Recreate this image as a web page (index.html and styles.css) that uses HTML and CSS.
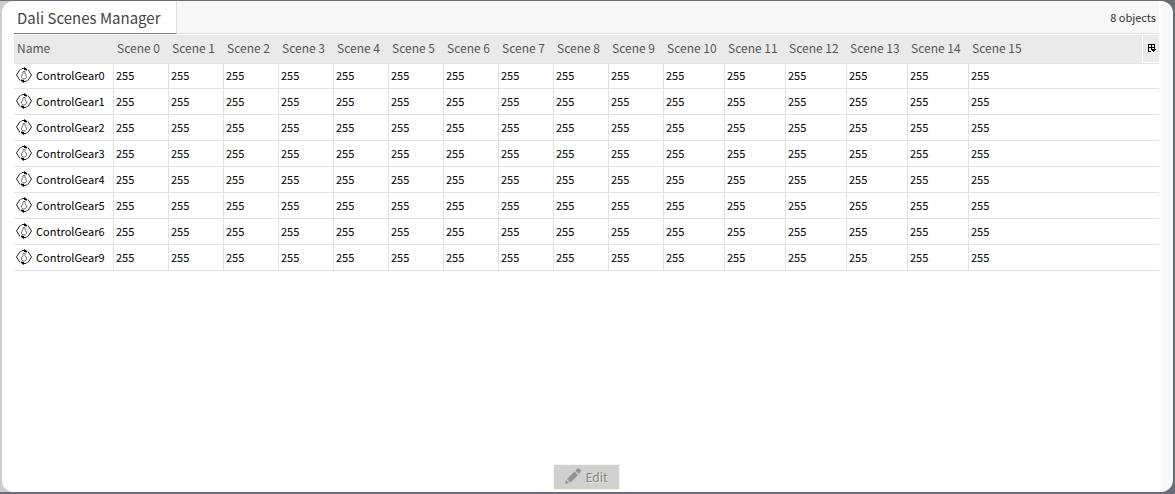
FILE: index.html
```
<!DOCTYPE html>
<html lang="en">
<head>
  <meta charset="UTF-8" />
  <meta name="viewport" content="width=device-width, initial-scale=1.0" />
  <title>Dali Scenes Manager</title>
  <link rel="stylesheet" href="styles.css">
</head>
<body>
  <!-- Shared icon for the device rows -->
  <svg class="sprite" aria-hidden="true">
    <symbol id="gear" viewBox="0 0 16 16">
      <path d="M4 2.500L0.500 8L4 13.500M12 2.500L15.500 8L12 13.500" />
      <path d="M4.500 3L6 1.500h3M11.500 13L10 14.500H7" />
      <path class="drop" d="M7 4.500h2v2l1.500 2.500c.3 2-.8 3-2.500 3s-2.800-1-2.500-3L7 6.500z" />
      <path class="tip" d="M8 0l3 2v1.500L8 3zM8 16l-3-2v-1.500l3 .5z" />
    </symbol>
  </svg>

  <main class="panel">
    <div class="content">
      <header class="titlebar">
        <h1>Dali Scenes Manager</h1>
        <span class="count">8 objects</span>
      </header>

      <table id="scenes">
        <thead>
          <tr>
            <th class="name">Name</th>
            <th class="narrow">Scene 0</th>
            <th class="narrow">Scene 1</th>
            <th class="narrow">Scene 2</th>
            <th class="narrow">Scene 3</th>
            <th class="narrow">Scene 4</th>
            <th class="narrow">Scene 5</th>
            <th class="narrow">Scene 6</th>
            <th class="narrow">Scene 7</th>
            <th class="narrow">Scene 8</th>
            <th class="narrow">Scene 9</th>
            <th class="wide">Scene 10</th>
            <th class="wide">Scene 11</th>
            <th class="wide">Scene 12</th>
            <th class="wide">Scene 13</th>
            <th class="wide">Scene 14</th>
            <th>Scene 15</th>
            <th class="options">
              <button type="button" aria-label="Table options">
                <svg width="8" height="8" viewBox="0 0 8 8" shape-rendering="crispEdges">
                  <path d="M0 0h7v5H6V4H4v1H3V4H1v3h2v1H0zM1 1v2h2V1zM4 1v2h2V1z" fill-rule="evenodd" />
                  <path d="M3 5h5v1H7v1H6v1H5V7H4V6H3z" />
                </svg>
              </button>
            </th>
          </tr>
        </thead>
        <tbody></tbody>
      </table>

      <footer class="actions">
        <button type="button" class="edit" disabled>
          <svg width="16" height="16" viewBox="0 0 16 16">
            <path d="M0 16l1-4 3 3zM2 11l7.500-7.500 3.500 3.500L5.500 14.500zM10.500 2.500L12 1c1-1 1.500-1 2.500 0l.7.700c.8.800.8 1.500 0 2.300L14 6z" />
          </svg>
          Edit
        </button>
      </footer>
    </div>
  </main>

  <script>
    const gears = [0, 1, 2, 3, 4, 5, 6, 9];
    const sceneCount = 16;
    const body = document.querySelector("#scenes tbody");

    gears.forEach((id) => {
      const row = body.insertRow();
      row.insertCell().innerHTML =
        `<div class="device"><svg width="16" height="16"><use href="#gear"/></svg>ControlGear${id}</div>`;
      for (let i = 0; i < sceneCount; i++) {
        row.insertCell().textContent = "255";
      }
      // the last scene runs on under the options button
      row.lastElementChild.colSpan = 2;
    });
  </script>
</body>
</html>
```
FILE: styles.css
```
* {
  box-sizing: border-box;
}

html {
  background-color: #696d78;
}

body {
  margin: 0;
  min-height: 100vh;
  padding: 0 2px;
  display: flex;
  font-family: "Noto Sans CJK SC", "Noto Sans", sans-serif;
  font-size: 11px;
  line-height: 16px;
  color: #000;
  background: linear-gradient(to right, #ccc 50%, #696d78 50%);
  border-top: 1px solid #696d78;
  border-bottom: 2px solid #696d78;
}

.sprite {
  position: absolute;
  width: 0;
  height: 0;
}

.panel {
  flex: 1;
  display: flex;
  padding-right: 11px;
  background-color: #f8f8f8;
  border-radius: 12px;
  overflow: hidden;
}

.content {
  flex: 1;
  display: flex;
  flex-direction: column;
  padding: 0 3px 0 12px;
  background-color: #fff;
}

.titlebar {
  display: flex;
  align-items: center;
  justify-content: space-between;
  height: 33px;
  margin-bottom: 1px;
  padding-right: 3px;
  background-color: #f8f8f8;
  border-bottom: 1px solid #e2e2e2;
}

h1 {
  align-self: flex-end;
  margin: 0 0 -1px;
  padding: 5px 16px 3px 3px;
  font-size: 15px;
  font-weight: 400;
  line-height: 24px;
  color: #444;
  background-color: #fff;
  border-right: 1px solid #e2e2e2;
  border-bottom: 1px solid #4f8ae0;
}

.count {
  color: #333;
}

table {
  width: 100%;
  table-layout: fixed;
  border-collapse: separate;
  border-spacing: 0;
}

th {
  height: 29px;
  padding: 0 0 2px 3px;
  font-size: 12px;
  font-weight: 400;
  text-align: left;
  color: #555;
  background-color: #eaeaea;
  border-bottom: 1px solid #e2e2e2;
}

.name {
  width: 100px;
}

.narrow {
  width: 55px;
}

.wide {
  width: 61px;
}

.options {
  width: 17px;
  padding: 0;
}

.options button {
  display: flex;
  align-items: center;
  justify-content: center;
  width: 100%;
  height: 28px;
  padding: 0 0 2px 1px;
  background-color: #eaeaea;
  border: 0;
  border-left: 1px solid #fff;
  border-bottom: 1px solid #fff;
}

td {
  height: 26px;
  padding: 0 2px 2px;
  border-right: 1px solid #e2e2e2;
  border-bottom: 1px solid #e2e2e2;
}

tbody tr:first-child td {
  height: 25px;
}

td:last-child {
  border-right: 0;
}

.device {
  display: flex;
  align-items: center;
  gap: 4px;
}

.device svg {
  fill: none;
  stroke: #222;
}

.drop {
  stroke: #777;
}

.tip {
  fill: #000;
  stroke: none;
}

.actions {
  display: flex;
  justify-content: center;
  margin-top: auto;
  padding-bottom: 2px;
}

.edit {
  display: flex;
  align-items: center;
  gap: 4px;
  height: 26px;
  padding: 0 11px 2px;
  font-family: inherit;
  font-size: 12px;
  color: #858585;
  background-color: #d0d0d0;
  border: 1px solid #f5f5e8;
  text-shadow: 1px 1px #e8e8dc;
}

.edit svg {
  fill: #929292;
}
```
